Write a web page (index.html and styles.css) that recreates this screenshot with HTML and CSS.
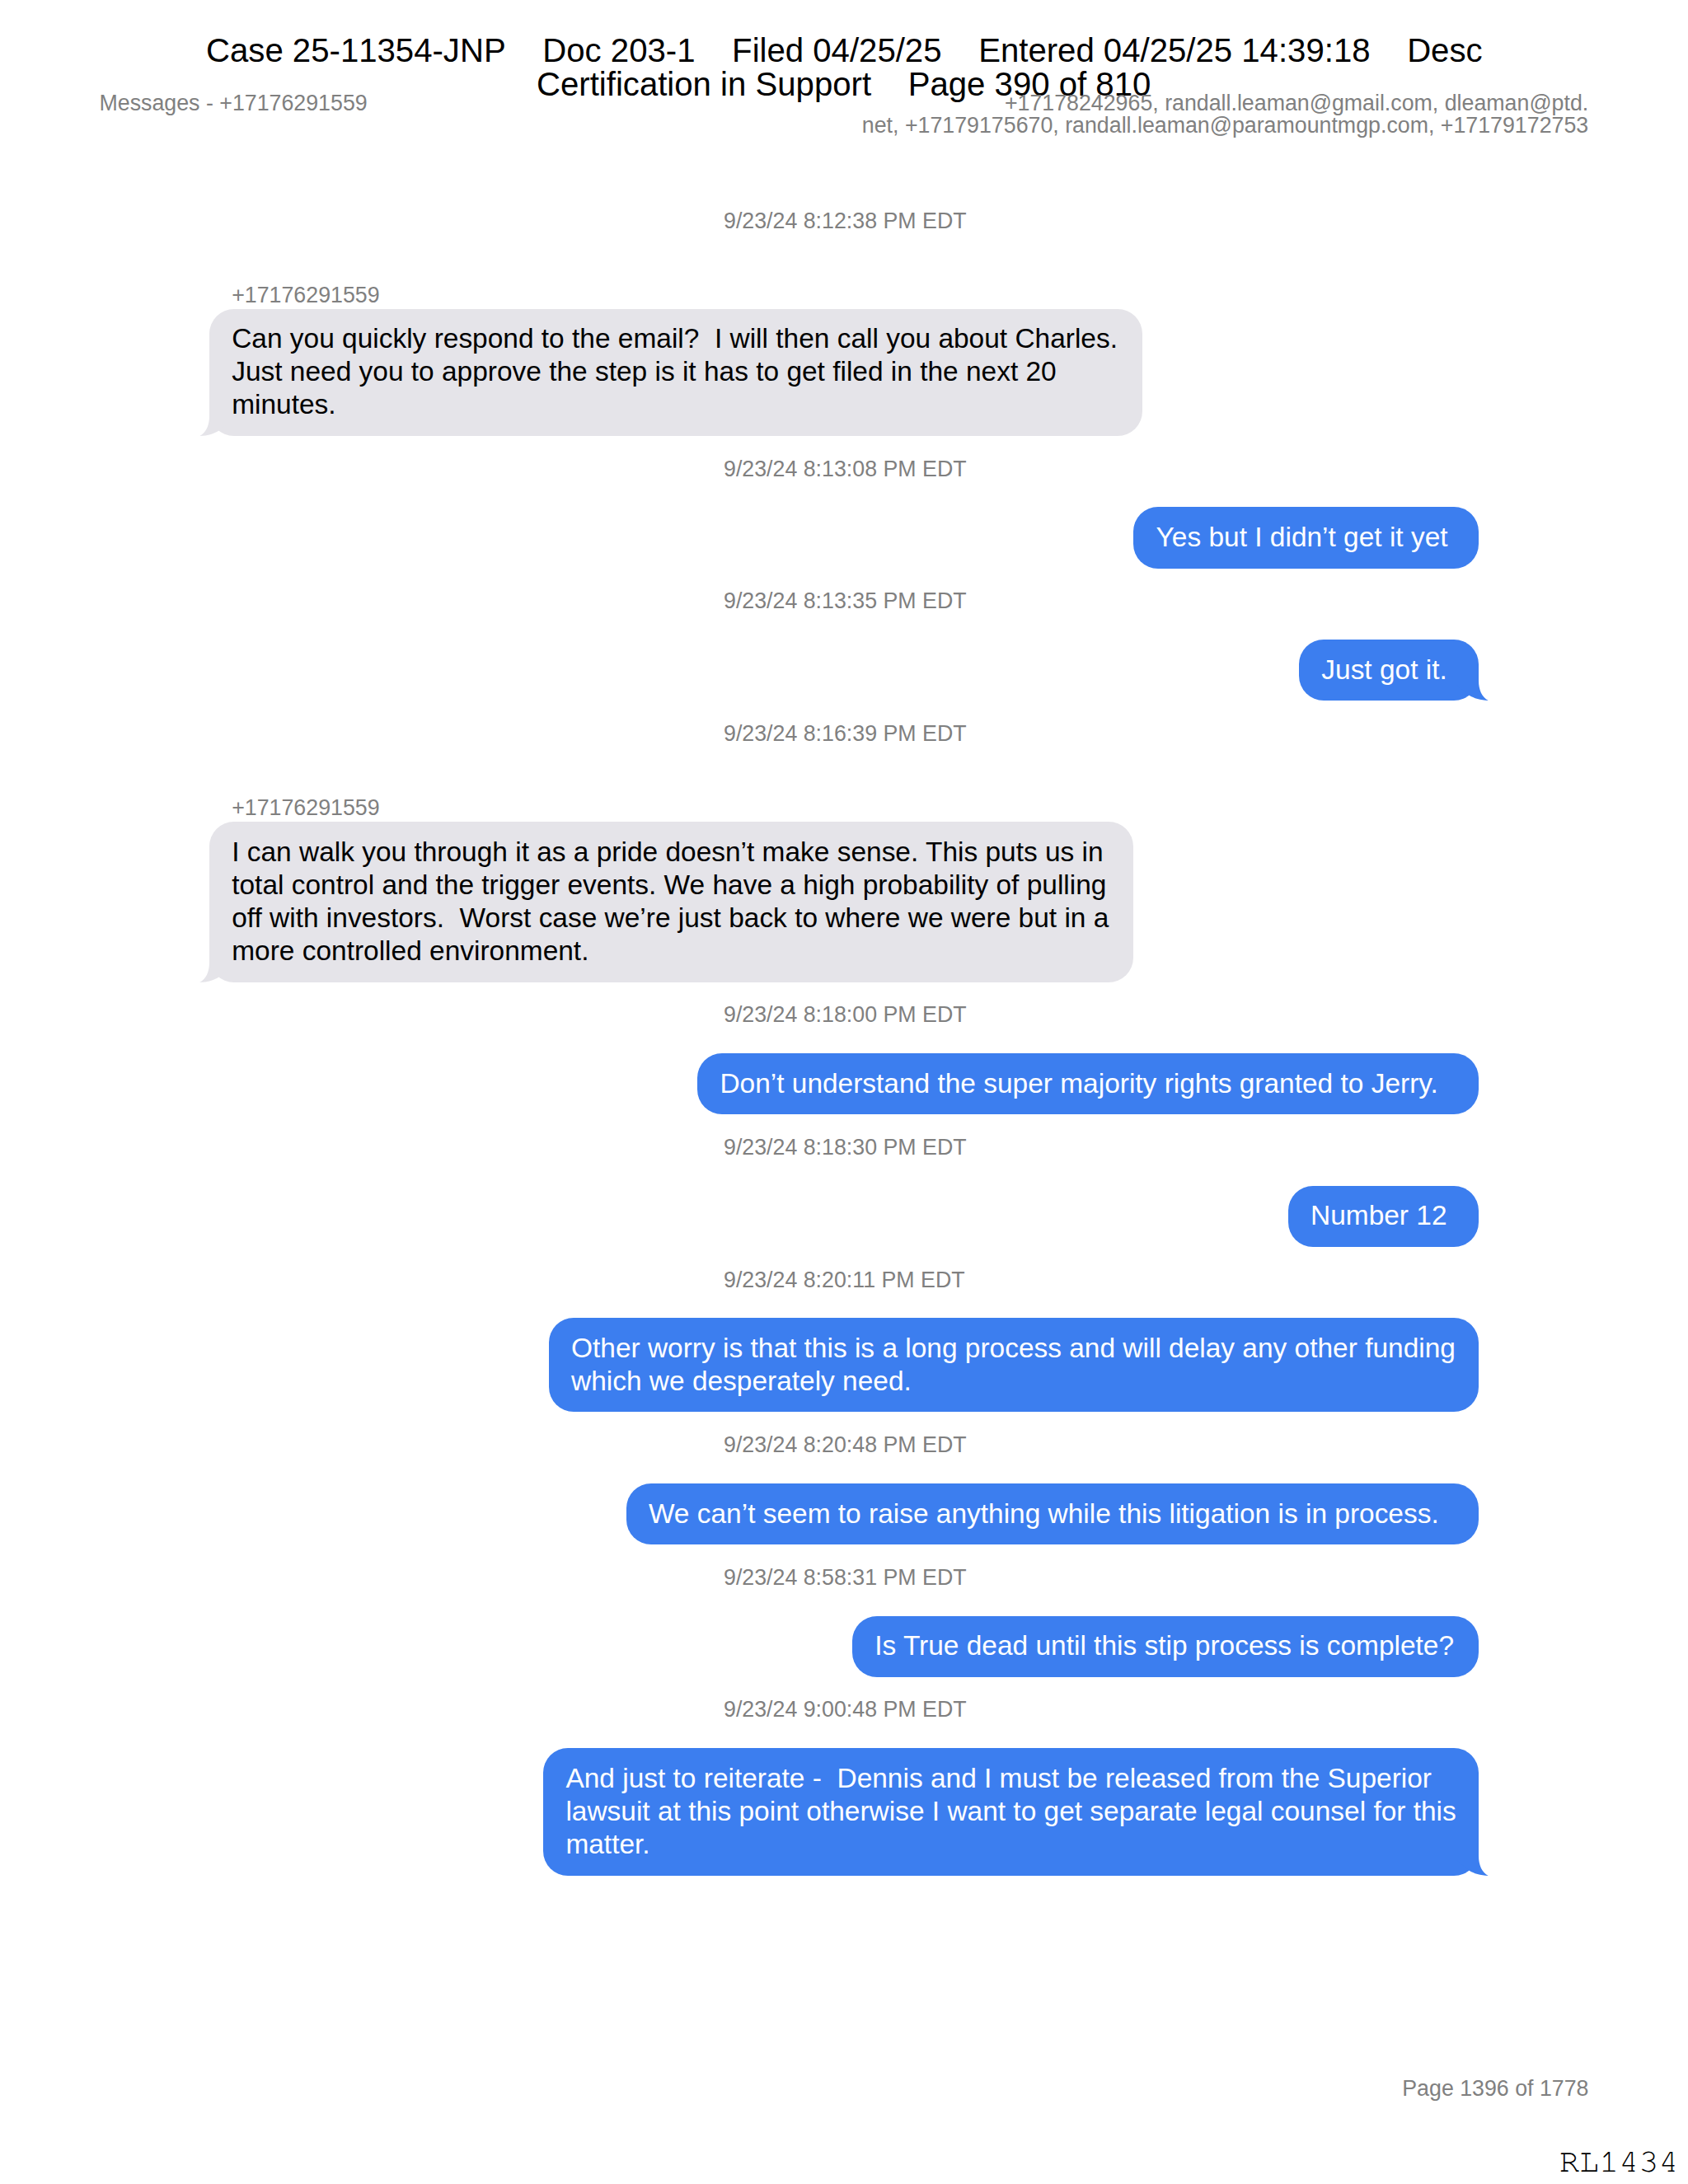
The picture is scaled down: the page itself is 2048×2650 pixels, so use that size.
FILE: index.html
```html
<!DOCTYPE html>
<html lang="en">
<head>
<meta charset="utf-8">
<title>Messages - +17176291559</title>
<link rel="stylesheet" href="styles.css">
</head>
<body>
<svg class="defs" aria-hidden="true">
  <symbol id="tail" viewBox="0 0 40 32"><path d="M0 0H28V8C28 19 32 28 39.7 32C30.2 31.6 22.2 29.5 16.4 25.6L0 12Z"/></symbol>
</svg>
<main class="page">
  <header class="stamp">
    <div>Case 25-11354-JNP    Doc 203-1    Filed 04/25/25    Entered 04/25/25 14:39:18    Desc</div>
    <div class="stamp-second">Certification in Support    Page 390 of 810</div>
  </header>
  <section class="heading">
    <div>Messages - +17176291559</div>
    <div class="recipients">+17178242965, randall.leaman@gmail.com, dleaman@ptd.<br>net, +17179175670, randall.leaman@paramountmgp.com, +17179172753</div>
  </section>
  <section class="thread">
    <time>9/23/24 8:12:38 PM EDT</time>
    <div class="sender">+17176291559</div>
    <div class="bubble in" style="width:1131.5px">Can you quickly respond to the email?  I will then call you about Charles.<br>Just need you to approve the step is it has to get filed in the next 20<br>minutes.<svg class="tail"><use href="#tail"/></svg></div>
    <time>9/23/24 8:13:08 PM EDT</time>
    <div class="bubble out" style="width:418.6px">Yes but I didn’t get it yet</div>
    <time>9/23/24 8:13:35 PM EDT</time>
    <div class="bubble out" style="width:217.9px">Just got it.<svg class="tail"><use href="#tail"/></svg></div>
    <time>9/23/24 8:16:39 PM EDT</time>
    <div class="sender">+17176291559</div>
    <div class="bubble in" style="width:1121.3px">I can walk you through it as a pride doesn’t make sense. This puts us in<br>total control and the trigger events. We have a high probability of pulling<br>off with investors.  Worst case we’re just back to where we were but in a<br>more controlled environment.<svg class="tail"><use href="#tail"/></svg></div>
    <time>9/23/24 8:18:00 PM EDT</time>
    <div class="bubble out" style="width:947.8px">Don’t understand the super majority rights granted to Jerry.</div>
    <time>9/23/24 8:18:30 PM EDT</time>
    <div class="bubble out" style="width:231.2px">Number 12</div>
    <time>9/23/24 8:20:11 PM EDT</time>
    <div class="bubble out" style="width:1128.2px">Other worry is that this is a long process and will delay any other funding<br>which we desperately need.</div>
    <time>9/23/24 8:20:48 PM EDT</time>
    <div class="bubble out" style="width:1034.3px">We can’t seem to raise anything while this litigation is in process.</div>
    <time>9/23/24 8:58:31 PM EDT</time>
    <div class="bubble out" style="width:760px">Is True dead until this stip process is complete?</div>
    <time>9/23/24 9:00:48 PM EDT</time>
    <div class="bubble out" style="width:1134.8px">And just to reiterate -  Dennis and I must be released from the Superior<br>lawsuit at this point otherwise I want to get separate legal counsel for this<br>matter.<svg class="tail"><use href="#tail"/></svg></div>
  </section>
  <footer>
    <div class="page-number">Page 1396 of 1778</div>
    <div class="bates">RL1434</div>
  </footer>
</main>
</body>
</html>
```
FILE: styles.css
```css
* { box-sizing: border-box; }
body { margin: 0; background: #fff; }
.defs { position: absolute; width: 0; height: 0; }

.page {
  width: 2048px;
  height: 2650px;
  overflow: hidden;
  display: flex;
  flex-direction: column;
  font-family: "Liberation Sans", Arial, sans-serif;
  font-size: 26.77px;
  line-height: 26.77px;
  color: #808080;
}

.stamp {
  flex: none;
  height: 112px;
  padding: 42.4px 0 0 250px;
  font-size: 40.15px;
  line-height: 40.15px;
  font-kerning: none;
  color: #000;
}
.stamp div { white-space: pre; }
.stamp-second { padding-left: 401px; }

.heading {
  flex: none;
  height: 142.5px;
  padding: 0 120.8px 0 120.5px;
  display: flex;
  justify-content: space-between;
  white-space: nowrap;
}
.recipients { text-align: right; }

.thread {
  width: 1540px;
  margin-left: 254px;
  display: flex;
  flex-direction: column;
}
time {
  height: 26.77px;
  margin-bottom: 32.9px;
  padding-left: 624px;
}
.sender {
  margin: 30.7px 0 2.9px;
  padding-left: 27.2px;
}
.bubble {
  position: relative;
  margin-bottom: 26.8px;
  padding: 16.6px 0 17.4px 27.2px;
  border-radius: 30px;
  font-size: 33.46px;
  line-height: 40.15px;
  white-space: pre;
}
.in { background: #e5e4e9; color: #000; fill: #e5e4e9; align-self: flex-start; }
.out { background: #3c7eef; color: #fff; fill: #3c7eef; align-self: flex-end; }
.tail {
  position: absolute;
  bottom: 0;
  width: 40px;
  height: 32px;
}
.out .tail { right: -12px; }
.in .tail { left: -12px; transform: scaleX(-1); }

footer {
  margin-top: auto;
  display: flex;
  flex-direction: column;
  align-items: flex-end;
}
.page-number { padding-right: 120.5px; }
.bates {
  margin-top: 53px;
  padding: 0 11.5px 3.9px 0;
  font: 40.15px/45px "Nimbus Mono PS", FreeMono, "Liberation Mono", monospace;
  color: #000;
}
```
